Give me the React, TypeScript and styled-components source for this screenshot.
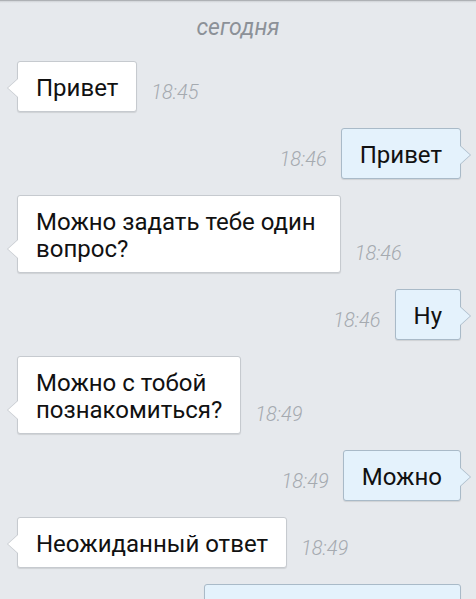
import React from 'react';
import styled, { createGlobalStyle, css } from 'styled-components';

type Message = {
  id: number;
  out: boolean;
  lines: string[];
  time: string;
};

const messages: Message[] = [
  { id: 1, out: false, lines: ['Привет'], time: '18:45' },
  { id: 2, out: true, lines: ['Привет'], time: '18:46' },
  { id: 3, out: false, lines: ['Можно задать тебе один ', 'вопрос?'], time: '18:46' },
  { id: 4, out: true, lines: ['Ну'], time: '18:46' },
  { id: 5, out: false, lines: ['Можно с тобой', 'познакомиться?'], time: '18:49' },
  { id: 6, out: true, lines: ['Можно'], time: '18:49' },
  { id: 7, out: false, lines: ['Неожиданный ответ'], time: '18:49' },
  { id: 8, out: true, lines: ['Почему бы и нет? :)'], time: '18:50' },
];

const GlobalStyle = createGlobalStyle`
  html, body {
    margin: 0;
    padding: 0;
    overflow: hidden;
    background: #e6e9ed;
  }
  body {
    font-family: Roboto, "Noto Sans", sans-serif;
  }
`;

const Screen = styled.div`
  width: 476px;
  min-height: 599px;
  background: #e6e9ed;
`;

const TopShadow = styled.div`
  height: 3px;
  background: linear-gradient(#8d9094, #cfd2d6 1px, #e6e9ed 3px);
`;

const DateLabel = styled.div`
  padding-top: 13px;
  text-align: center;
  font-size: 23px;
  line-height: 24px;
  font-style: italic;
  color: #8c9198;
`;

const List = styled.div`
  display: flex;
  flex-direction: column;
  gap: 16px;
  margin-top: 21px;
`;

const Row = styled.div<{ $out: boolean }>`
  display: flex;
  align-items: flex-end;
  gap: 14px;
  flex-direction: ${(p) => (p.$out ? 'row-reverse' : 'row')};
  padding: ${(p) => (p.$out ? '0 15px 0 0' : '0 0 0 17px')};
`;

const Bubble = styled.div<{ $out: boolean }>`
  position: relative;
  padding: 13px 18px 9px 18px;
  border-radius: 3px;
  font-size: 24px;
  line-height: 27px;
  color: #111111;
  box-shadow: 0 1px 1px rgba(0, 0, 0, 0.1);
  ${(p) =>
    p.$out
      ? css`
          background: #e4f2fc;
          border: 1px solid #a9bac8;
        `
      : css`
          background: #ffffff;
          border: 1px solid #c6cacf;
        `}

  &::before,
  &::after {
    content: '';
    position: absolute;
    bottom: 14px;
    border-top: 9px solid transparent;
    border-bottom: 9px solid transparent;
  }

  ${(p) =>
    p.$out
      ? css`
          &::before {
            right: -11px;
            border-left: 10px solid #a9bac8;
          }
          &::after {
            right: -10px;
            border-left: 10px solid #e4f2fc;
          }
        `
      : css`
          &::before {
            left: -11px;
            border-right: 10px solid #c6cacf;
          }
          &::after {
            left: -10px;
            border-right: 10px solid #ffffff;
          }
        `}
`;

const Line = styled.div`
  white-space: pre;
`;

const Time = styled.span`
  margin-bottom: 10px;
  font-size: 20px;
  line-height: 20px;
  font-style: italic;
  font-weight: 300;
  color: #a5aab0;
`;

export default function App() {
  return (
    <Screen>
      <GlobalStyle />
      <TopShadow />
      <DateLabel>сегодня</DateLabel>
      <List>
        {messages.map((m) => (
          <Row key={m.id} $out={m.out}>
            <Bubble $out={m.out}>
              {m.lines.map((l) => (
                <Line key={l}>{l}</Line>
              ))}
            </Bubble>
            <Time>{m.time}</Time>
          </Row>
        ))}
      </List>
    </Screen>
  );
}
